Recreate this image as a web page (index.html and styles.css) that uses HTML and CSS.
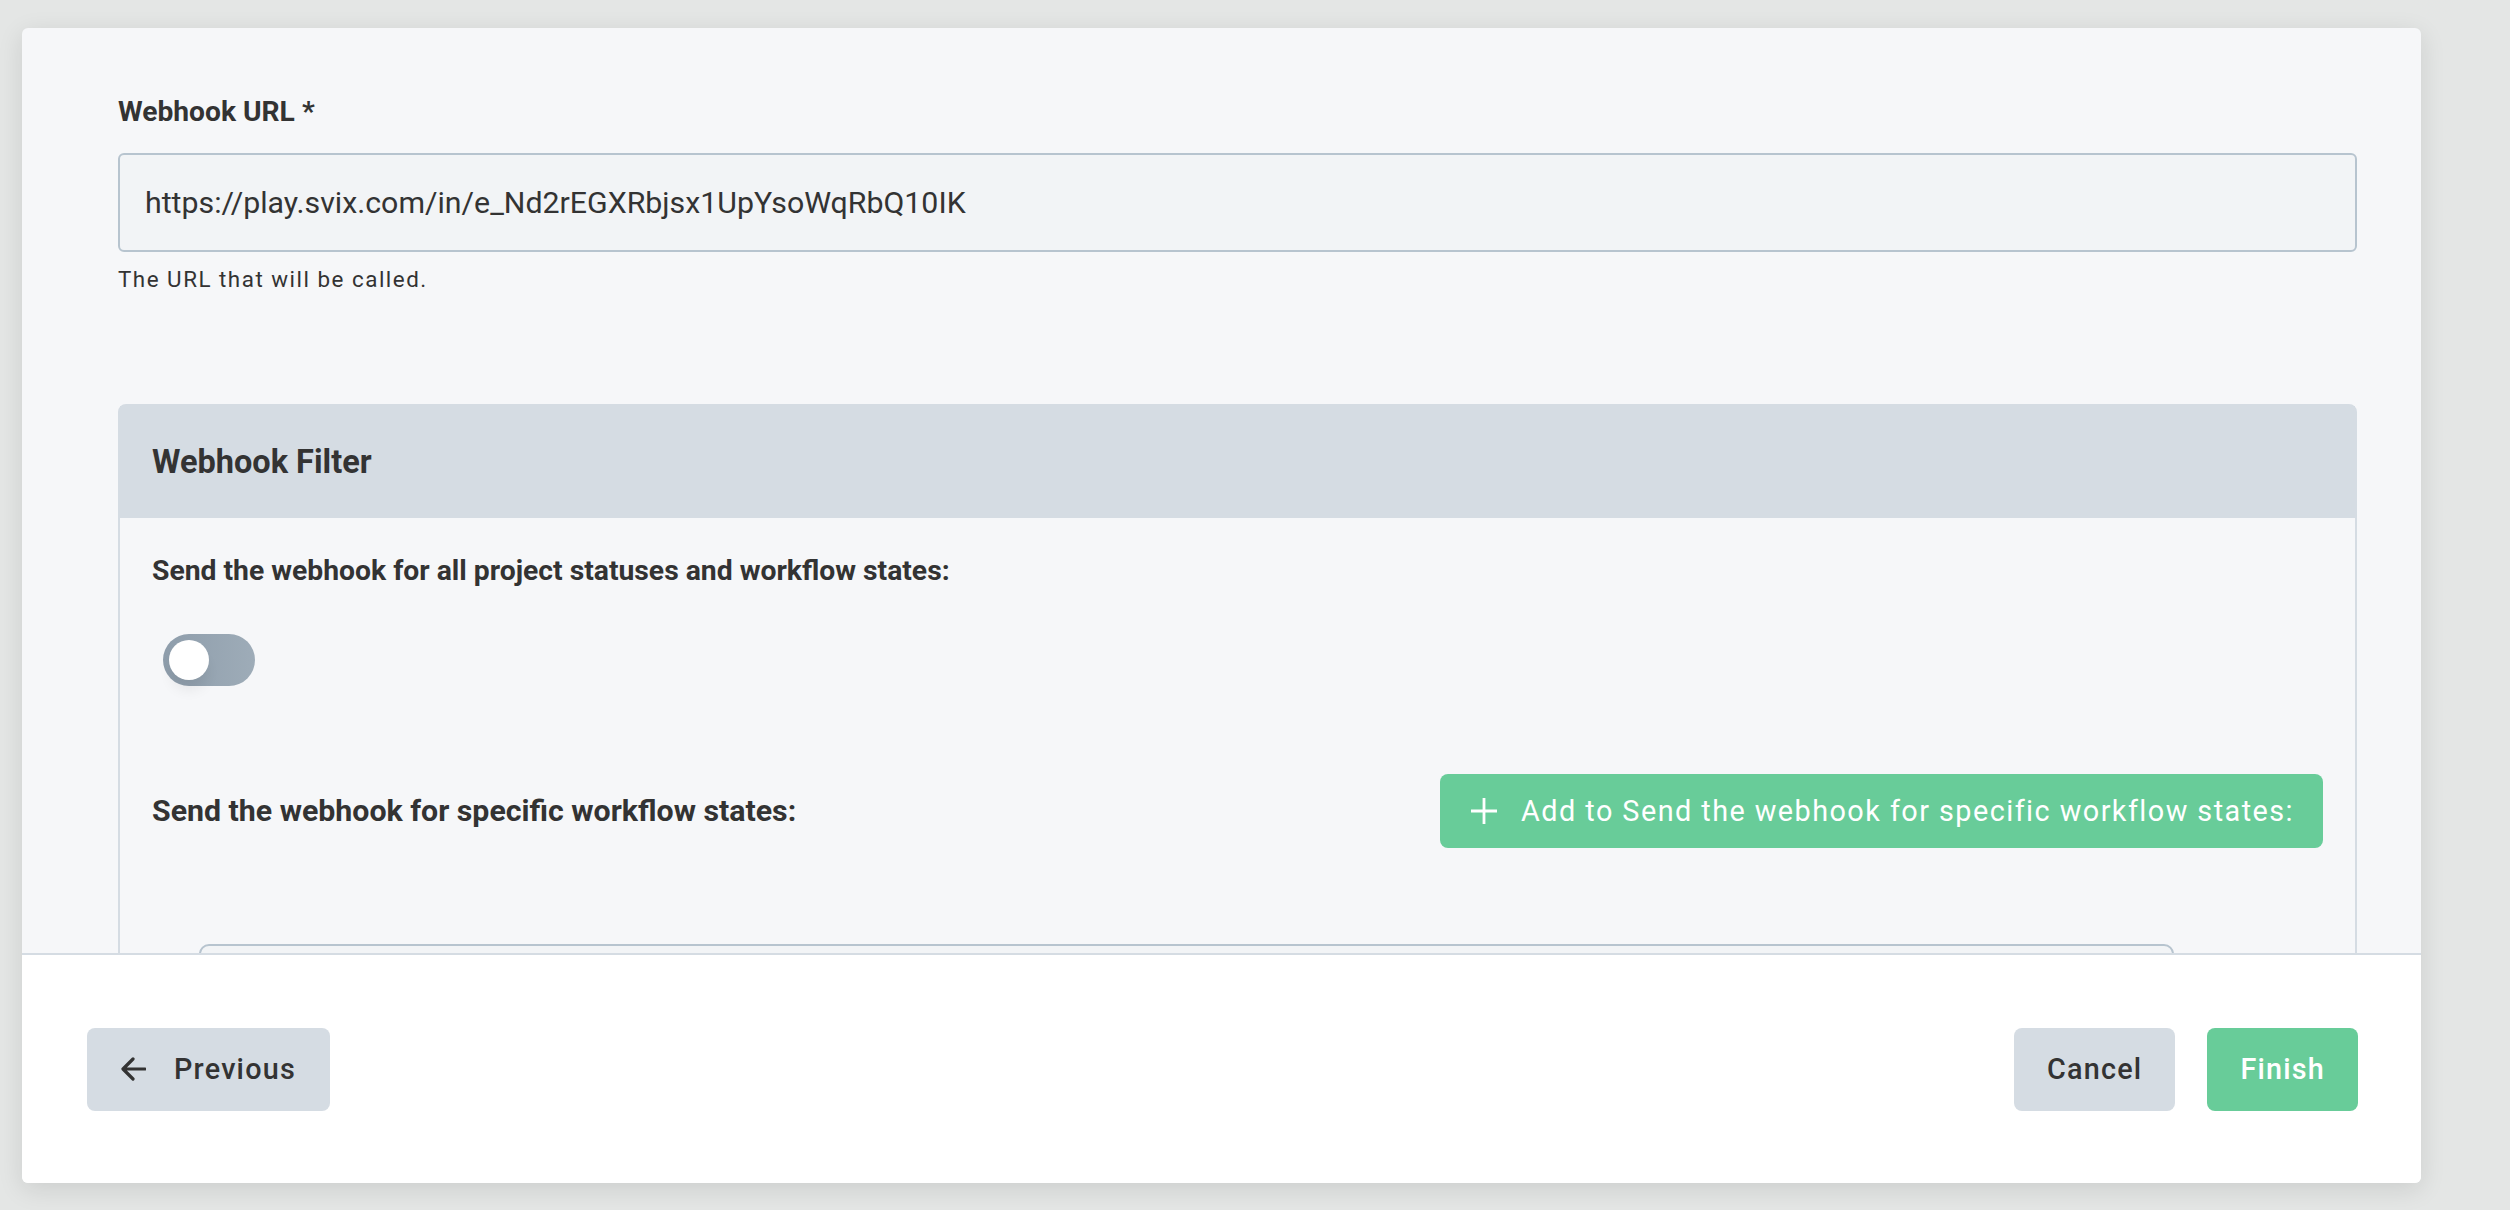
FILE: index.html
```html
<!DOCTYPE html>
<html lang="en">

<head>
  <meta charset="UTF-8">
  <meta name="viewport" content="width=device-width, initial-scale=1.0">
  <title>Webhook</title>
  <link rel="stylesheet" href="styles.css">
</head>

<body>
  <div class="modal">
    <div class="modal-body">
      <div class="field">
        <label class="field-label">Webhook URL *</label>
        <div class="text-input">https://play.svix.com/in/e_Nd2rEGXRbjsx1UpYsoWqRbQ10IK</div>
        <div class="field-help">The URL that will be called.</div>
      </div>

      <section class="filter-card">
        <header class="filter-head">Webhook Filter</header>
        <div class="filter-body">
          <div class="filter-label">Send the webhook for all project statuses and workflow states:</div>
          <div class="switch"><span class="switch-knob"></span></div>

          <div class="filter-row">
            <div class="filter-label filter-label-lg">Send the webhook for specific workflow states:</div>
            <button class="btn btn-green btn-add">
              <svg class="icon-plus" viewBox="0 0 28 28">
                <path d="M14 1v26M1 14h26" />
              </svg>
              Add to Send the webhook for specific workflow states:
            </button>
          </div>

          <div class="state-box"></div>
        </div>
      </section>
    </div>

    <footer class="modal-foot">
      <button class="btn btn-gray btn-prev">
        <svg class="icon-back" viewBox="0 0 25 24">
          <path d="M24 12H3M12 2L2 12l10 10" />
        </svg>
        Previous
      </button>
      <div class="foot-right">
        <button class="btn btn-gray">Cancel</button>
        <button class="btn btn-green">Finish</button>
      </div>
    </footer>
  </div>
</body>

</html>
```

FILE: styles.css
```css
html,
body {
  height: 100%;
}

body {
  margin: 0;
  overflow: hidden;
  background: #e4e6e5;
  font-family: Roboto, "Liberation Sans", sans-serif;
  color: #333;
}

.modal {
  margin: 28px 0 0 22px;
  width: 2399px;
  height: 1155px;
  display: flex;
  flex-direction: column;
  background: #f6f7f9;
  border-radius: 6px;
  overflow: hidden;
  box-shadow: 0 6px 26px rgba(0, 0, 0, 0.11);
}

.modal-body {
  flex: 1;
  overflow: hidden;
  padding: 64px 64px 0 96px;
}

.field-label {
  display: block;
  font-size: 28.2px;
  font-weight: 700;
  line-height: 40px;
}

.text-input {
  margin-top: 21px;
  height: 99px;
  box-sizing: border-box;
  border: 2px solid #b7c4cf;
  border-radius: 6px;
  background: #f2f4f6;
  padding: 0 25px;
  display: flex;
  align-items: center;
  font-size: 30.3px;
}

.field-help {
  margin-top: 11px;
  font-size: 22.4px;
  line-height: 33px;
  letter-spacing: 1.5px;
}

.filter-card {
  margin-top: 108px;
  border: 2px solid #d5dce3;
  border-radius: 8px 8px 0 0;
}

.filter-head {
  height: 112px;
  box-sizing: border-box;
  padding: 0 32px;
  display: flex;
  align-items: center;
  background: #d5dce3;
  font-size: 32.5px;
  font-weight: 700;
}

.filter-body {
  padding: 34px 32px 0;
}

.filter-label {
  font-size: 28.3px;
  font-weight: 700;
  line-height: 38px;
}

.filter-label-lg {
  font-size: 30.3px;
}

.switch {
  margin: 44px 0 0 11px;
  width: 92px;
  height: 52px;
  box-sizing: border-box;
  padding: 6px;
  border-radius: 26px;
  background: linear-gradient(90deg, #8e9dab, #9eacb8);
}

.switch-knob {
  display: block;
  width: 40px;
  height: 40px;
  border-radius: 50%;
  background: #fff;
  box-shadow: 0 12px 14px -2px rgba(0, 0, 0, 0.07);
}

.filter-row {
  margin-top: 88px;
  display: flex;
  justify-content: space-between;
  align-items: center;
}

.state-box {
  margin: 96px 149px 0 47px;
  height: 120px;
  border: 2px solid #b7c4cf;
  border-radius: 10px;
  background: #f2f4f6;
}

.btn {
  height: 83px;
  box-sizing: border-box;
  padding: 0 33px;
  border: none;
  border-radius: 8px;
  display: inline-flex;
  align-items: center;
  font-family: Roboto, "Liberation Sans", sans-serif;
  font-size: 28.8px;
  font-weight: 500;
  letter-spacing: 1.2px;
}

.btn-gray {
  background: #d5dce3;
  color: #333;
}

.btn-green {
  background: #68cc99;
  color: #fff;
}

.btn-add {
  height: 74px;
  padding: 0 29px 0 30px;
  gap: 23px;
  font-weight: 400;
  letter-spacing: 1.45px;
}

.icon-plus {
  width: 28px;
  height: 28px;
  fill: none;
  stroke: #fff;
  stroke-width: 2.8;
}

.btn-prev {
  padding: 0 34px;
  gap: 28px;
}

.icon-back {
  width: 25px;
  height: 24px;
  fill: none;
  stroke: #333;
  stroke-width: 3.2;
  stroke-linecap: round;
  stroke-linejoin: round;
}

.modal-foot {
  height: 230px;
  box-sizing: border-box;
  padding: 0 63px 0 65px;
  border-top: 2px solid #d5dce3;
  background: #fff;
  display: flex;
  justify-content: space-between;
  align-items: center;
}

.foot-right {
  display: flex;
  gap: 32px;
}
```
